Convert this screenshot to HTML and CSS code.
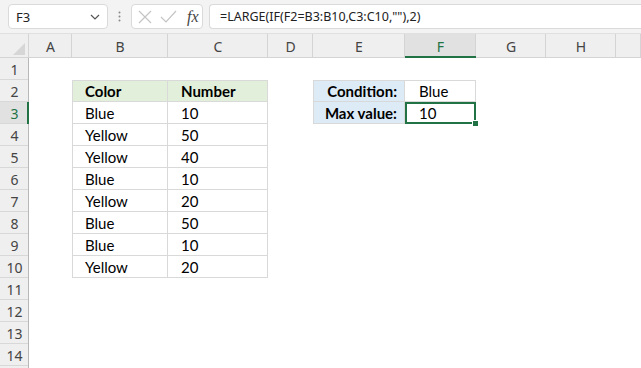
FILE: index.html
```html
<!DOCTYPE html>
<html lang="en">
<head>
    <meta charset="UTF-8">
    <title>LARGE with IF</title>
    <link rel="stylesheet" href="styles.css">
</head>
<body>
    <div class="toolbar">
        <div class="namebox">
            <span>F3</span>
            <svg class="chevron" width="10" height="6" viewBox="0 0 10 6"><path d="M1 1 L5 5 L9 1" fill="none" stroke="#555" stroke-width="1.2"/></svg>
        </div>
        <svg class="grip" width="3" height="11" viewBox="0 0 3 11"><circle cx="1.5" cy="1.5" r="1" fill="#888"/><circle cx="1.5" cy="5.5" r="1" fill="#888"/><circle cx="1.5" cy="9.5" r="1" fill="#888"/></svg>
        <div class="fbuttons">
            <svg width="14" height="14" viewBox="0 0 14 14"><path d="M1 1 L13 13 M13 1 L1 13" stroke="#c4c4c4" stroke-width="1.2"/></svg>
            <svg width="17" height="13" viewBox="0 0 17 13"><path d="M1 7 L6 12 L16 1" fill="none" stroke="#c4c4c4" stroke-width="1.2"/></svg>
            <span class="fx">fx</span>
        </div>
        <div class="formula">=LARGE(IF(F2=B3:B10,C3:C10,""),2)</div>
    </div>

    <table class="sheet">
        <colgroup>
            <col class="c-rh"><col class="c-a"><col class="c-b"><col class="c-c"><col class="c-d">
            <col class="c-e"><col class="c-f"><col class="c-g"><col class="c-h"><col class="c-i">
        </colgroup>
        <tr class="colhead">
            <th class="corner"><div class="tri"></div></th>
            <th>A</th><th>B</th><th>C</th><th>D</th><th>E</th><th class="sel">F</th><th>G</th><th>H</th><th></th>
        </tr>
        <tr><td class="rh">1</td><td></td><td></td><td></td><td></td><td></td><td></td><td></td><td></td><td></td></tr>
        <tr><td class="rh">2</td><td></td>
            <td class="hd top left">Color</td><td class="hd top">Number</td><td></td>
            <td class="lbl top left">Condition:</td><td class="val top">Blue</td><td></td><td></td><td></td></tr>
        <tr><td class="rh sel">3</td><td></td>
            <td class="d left">Blue</td><td class="d">10</td><td></td>
            <td class="lbl left">Max value:</td><td class="val active">10<div class="handle"></div></td><td></td><td></td><td></td></tr>
        <tr><td class="rh">4</td><td></td><td class="d left">Yellow</td><td class="d">50</td><td></td><td></td><td></td><td></td><td></td><td></td></tr>
        <tr><td class="rh">5</td><td></td><td class="d left">Yellow</td><td class="d">40</td><td></td><td></td><td></td><td></td><td></td><td></td></tr>
        <tr><td class="rh">6</td><td></td><td class="d left">Blue</td><td class="d">10</td><td></td><td></td><td></td><td></td><td></td><td></td></tr>
        <tr><td class="rh">7</td><td></td><td class="d left">Yellow</td><td class="d">20</td><td></td><td></td><td></td><td></td><td></td><td></td></tr>
        <tr><td class="rh">8</td><td></td><td class="d left">Blue</td><td class="d">50</td><td></td><td></td><td></td><td></td><td></td><td></td></tr>
        <tr><td class="rh">9</td><td></td><td class="d left">Blue</td><td class="d">10</td><td></td><td></td><td></td><td></td><td></td><td></td></tr>
        <tr><td class="rh">10</td><td></td><td class="d left">Yellow</td><td class="d">20</td><td></td><td></td><td></td><td></td><td></td><td></td></tr>
        <tr><td class="rh">11</td><td></td><td></td><td></td><td></td><td></td><td></td><td></td><td></td><td></td></tr>
        <tr><td class="rh">12</td><td></td><td></td><td></td><td></td><td></td><td></td><td></td><td></td><td></td></tr>
        <tr><td class="rh">13</td><td></td><td></td><td></td><td></td><td></td><td></td><td></td><td></td><td></td></tr>
        <tr><td class="rh">14</td><td></td><td></td><td></td><td></td><td></td><td></td><td></td><td></td><td></td></tr>
        <tr><td class="rh"></td><td></td><td></td><td></td><td></td><td></td><td></td><td></td><td></td><td></td></tr>
    </table>
</body>
</html>
```

FILE: styles.css
```css
html, body {
    margin: 0;
    padding: 0;
    background-color: #ffffff;
    overflow: hidden;
    height: 368px;
}

.toolbar {
    display: flex;
    align-items: center;
    height: 34px;
    padding: 0 0 0 8px;
    background-color: #f3f3f3;
    border-bottom: 1px solid #e0e0e0;
    box-sizing: border-box;
    font-family: "Noto Sans", "Open Sans", sans-serif;
    font-size: 13px;
    color: #222;
}
.namebox {
    display: flex;
    align-items: center;
    justify-content: space-between;
    width: 100px;
    height: 25px;
    box-sizing: border-box;
    padding: 0 7px 0 7px;
    background-color: #fff;
    border: 1px solid #dadada;
    border-radius: 4px;
}
.grip {
    margin: 0 10px 0 10px;
}
.fbuttons {
    display: flex;
    align-items: center;
    gap: 8px;
    width: 72px;
    height: 25px;
    box-sizing: border-box;
    padding: 0 0 0 6px;
    background-color: #fff;
    border: 1px solid #dadada;
    border-radius: 4px;
}
.fx {
    font-family: "Liberation Serif", serif;
    font-style: italic;
    font-size: 16px;
    color: #444;
    margin-left: 2px;
}
.formula {
    flex: 1;
    height: 25px;
    line-height: 23px;
    box-sizing: border-box;
    margin-left: 6px;
    padding-left: 10px;
    font-size: 12.5px;
    background-color: #fff;
    border: 1px solid #dadada;
    border-right: none;
    border-radius: 4px 0 0 4px;
}

.sheet {
    table-layout: fixed;
    border-collapse: separate;
    border-spacing: 0;
    width: 641px;
    font-family: "Lato", "Liberation Sans", sans-serif;
    font-size: 15px;
    color: #000;
}
.c-rh { width: 29px; }
.c-a { width: 43px; }
.c-b { width: 96px; }
.c-c { width: 100px; }
.c-d { width: 45px; }
.c-e { width: 92px; }
.c-f { width: 71px; }
.c-g { width: 70px; }
.c-h { width: 70px; }
.c-i { width: 25px; }

.sheet td, .sheet th {
    padding: 0;
    height: 22px;
    white-space: nowrap;
    overflow: visible;
}

.colhead th {
    height: 24px;
    background-color: #efefef;
    font-family: "Noto Sans", "Open Sans", sans-serif;
    font-weight: normal;
    font-size: 14px;
    color: #444;
    box-shadow: inset -1px -1px 0 #d4d4d4, inset 0 -1px 0 #b8b8b8;
}
.colhead th.sel {
    background-color: #e1e1e1;
    color: #217346;
    box-shadow: inset 0 -2px 0 #217346, inset -1px 0 0 #d4d4d4;
}
.corner {
    position: relative;
}
.tri {
    position: absolute;
    right: 4px;
    bottom: 3px;
    width: 0;
    height: 0;
    border-left: 12px solid transparent;
    border-bottom: 12px solid #d6d6d6;
}

.sheet .rh {
    background-color: #efefef;
    text-align: center;
    font-family: "Noto Sans", "Open Sans", sans-serif;
    font-size: 14px;
    color: #444;
    box-shadow: inset -1px 0 0 #b8b8b8, inset 0 -1px 0 #d8d8d8;
}
.sheet .rh.sel {
    background-color: #e1e1e1;
    color: #217346;
    box-shadow: inset -2px 0 0 #217346, inset 0 -1px 0 #d8d8d8;
}

.sheet .d, .sheet .hd, .sheet .val {
    padding-left: 13px;
    box-shadow: inset -1px -1px 0 #d9d9d9;
}
.sheet .left {
    box-shadow: inset -1px -1px 0 #d9d9d9, inset 1px 0 0 #d9d9d9;
}
.sheet .top {
    box-shadow: inset -1px -1px 0 #d9d9d9, inset 0 1px 0 #d9d9d9;
}
.sheet .top.left {
    box-shadow: inset -1px -1px 0 #d9d9d9, inset 1px 1px 0 #d9d9d9;
}
.sheet .hd {
    background-color: #e2efda;
    font-weight: bold;
}
.sheet .lbl {
    background-color: #ddebf7;
    font-weight: bold;
    text-align: right;
    padding-right: 8px;
}
.sheet .val {
    padding-left: 14px;
}
.sheet .val.active {
    position: relative;
    box-shadow: inset 0 0 0 2px #217346;
}
.handle {
    position: absolute;
    right: -3px;
    bottom: -3px;
    width: 5px;
    height: 5px;
    background-color: #217346;
    border: 1px solid #fff;
}
```
